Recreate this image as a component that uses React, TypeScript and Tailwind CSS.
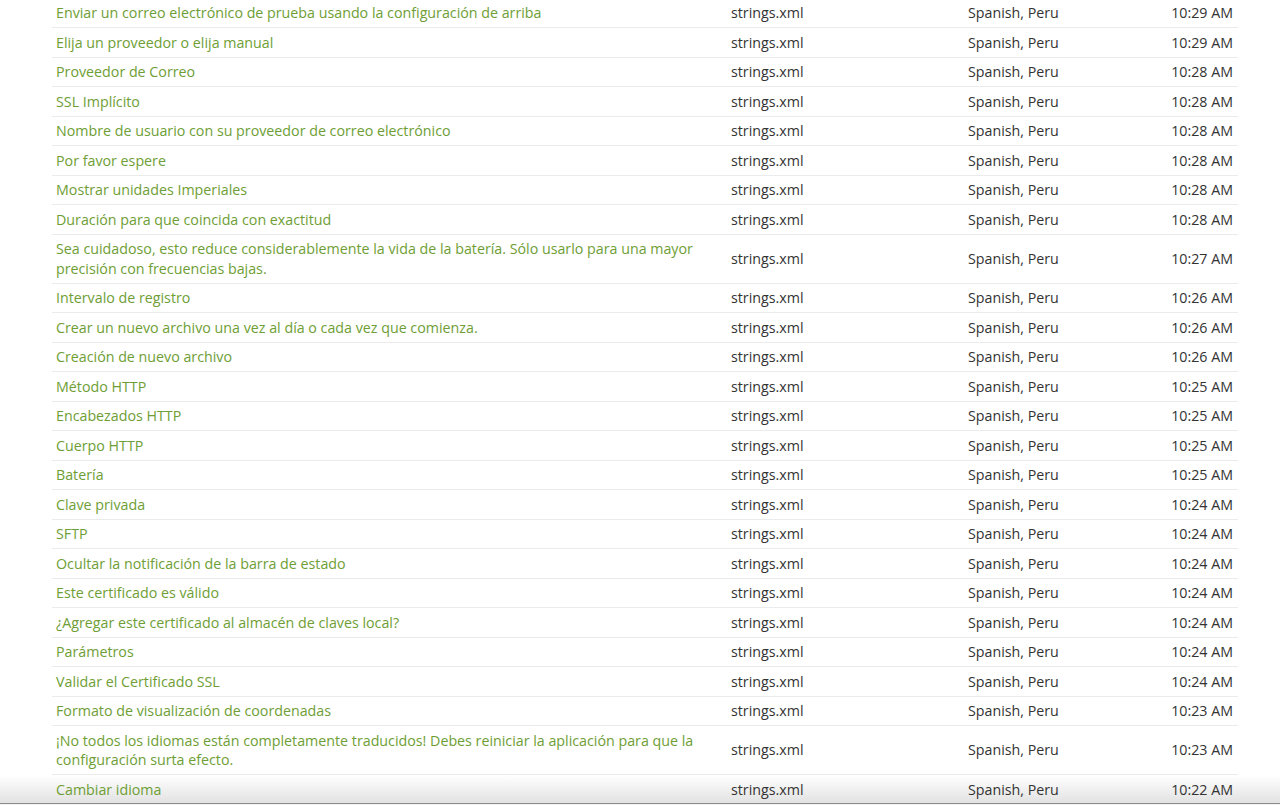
const rows: [string, string][] = [
  ["Enviar un correo electrónico de prueba usando la configuración de arriba", "10:29 AM"],
  ["Elija un proveedor o elija manual", "10:29 AM"],
  ["Proveedor de Correo", "10:28 AM"],
  ["SSL Implícito", "10:28 AM"],
  ["Nombre de usuario con su proveedor de correo electrónico", "10:28 AM"],
  ["Por favor espere", "10:28 AM"],
  ["Mostrar unidades Imperiales", "10:28 AM"],
  ["Duración para que coincida con exactitud", "10:28 AM"],
  [
    "Sea cuidadoso, esto reduce considerablemente la vida de la batería. Sólo usarlo para una mayor precisión con frecuencias bajas.",
    "10:27 AM",
  ],
  ["Intervalo de registro", "10:26 AM"],
  ["Crear un nuevo archivo una vez al día o cada vez que comienza.", "10:26 AM"],
  ["Creación de nuevo archivo", "10:26 AM"],
  ["Método HTTP", "10:25 AM"],
  ["Encabezados HTTP", "10:25 AM"],
  ["Cuerpo HTTP", "10:25 AM"],
  ["Batería", "10:25 AM"],
  ["Clave privada", "10:24 AM"],
  ["SFTP", "10:24 AM"],
  ["Ocultar la notificación de la barra de estado", "10:24 AM"],
  ["Este certificado es válido", "10:24 AM"],
  ["¿Agregar este certificado al almacén de claves local?", "10:24 AM"],
  ["Parámetros", "10:24 AM"],
  ["Validar el Certificado SSL", "10:24 AM"],
  ["Formato de visualización de coordenadas", "10:23 AM"],
  [
    "¡No todos los idiomas están completamente traducidos! Debes reiniciar la aplicación para que la configuración surta efecto.",
    "10:23 AM",
  ],
  ["Cambiar idioma", "10:22 AM"],
]

export default function App() {
  return (
    <div
      className="relative h-[805px] overflow-hidden bg-white text-[14.25px] leading-[19.5px] text-[#333333]"
      style={{ fontFamily: '"Open Sans", "Liberation Sans", sans-serif' }}
    >
      {/* bottom fade sits behind the rows */}
      <div className="pointer-events-none absolute inset-x-0 bottom-0 h-[30px] bg-gradient-to-b from-white/0 to-[#e0e0e0]" />

      <div className="relative -mt-[2.5px] pl-[52px] pr-[42px]">
        <table className="w-full table-fixed border-collapse">
          <colgroup>
            <col className="w-[675px]" />
            <col className="w-[237px]" />
            <col className="w-[170px]" />
            <col />
          </colgroup>
          <tbody>
            {rows.map(([text, time], i) => (
              <tr key={i} className="border-t border-[#ebebeb]">
                <td className="px-[4px] py-[4.5px] align-middle text-[#6e9e35]">{text}</td>
                <td className="px-[4px] py-[4.5px] align-middle">strings.xml</td>
                <td className="px-[4px] py-[4.5px] align-middle">Spanish, Peru</td>
                <td className="px-[5px] py-[4.5px] text-right align-middle">{time}</td>
              </tr>
            ))}
          </tbody>
        </table>
      </div>

      <div className="absolute inset-x-0 bottom-[1px] h-px bg-[#8c8c8c]" />
      <div className="absolute inset-x-0 bottom-0 h-px bg-[#f2f2f2]" />
    </div>
  )
}
